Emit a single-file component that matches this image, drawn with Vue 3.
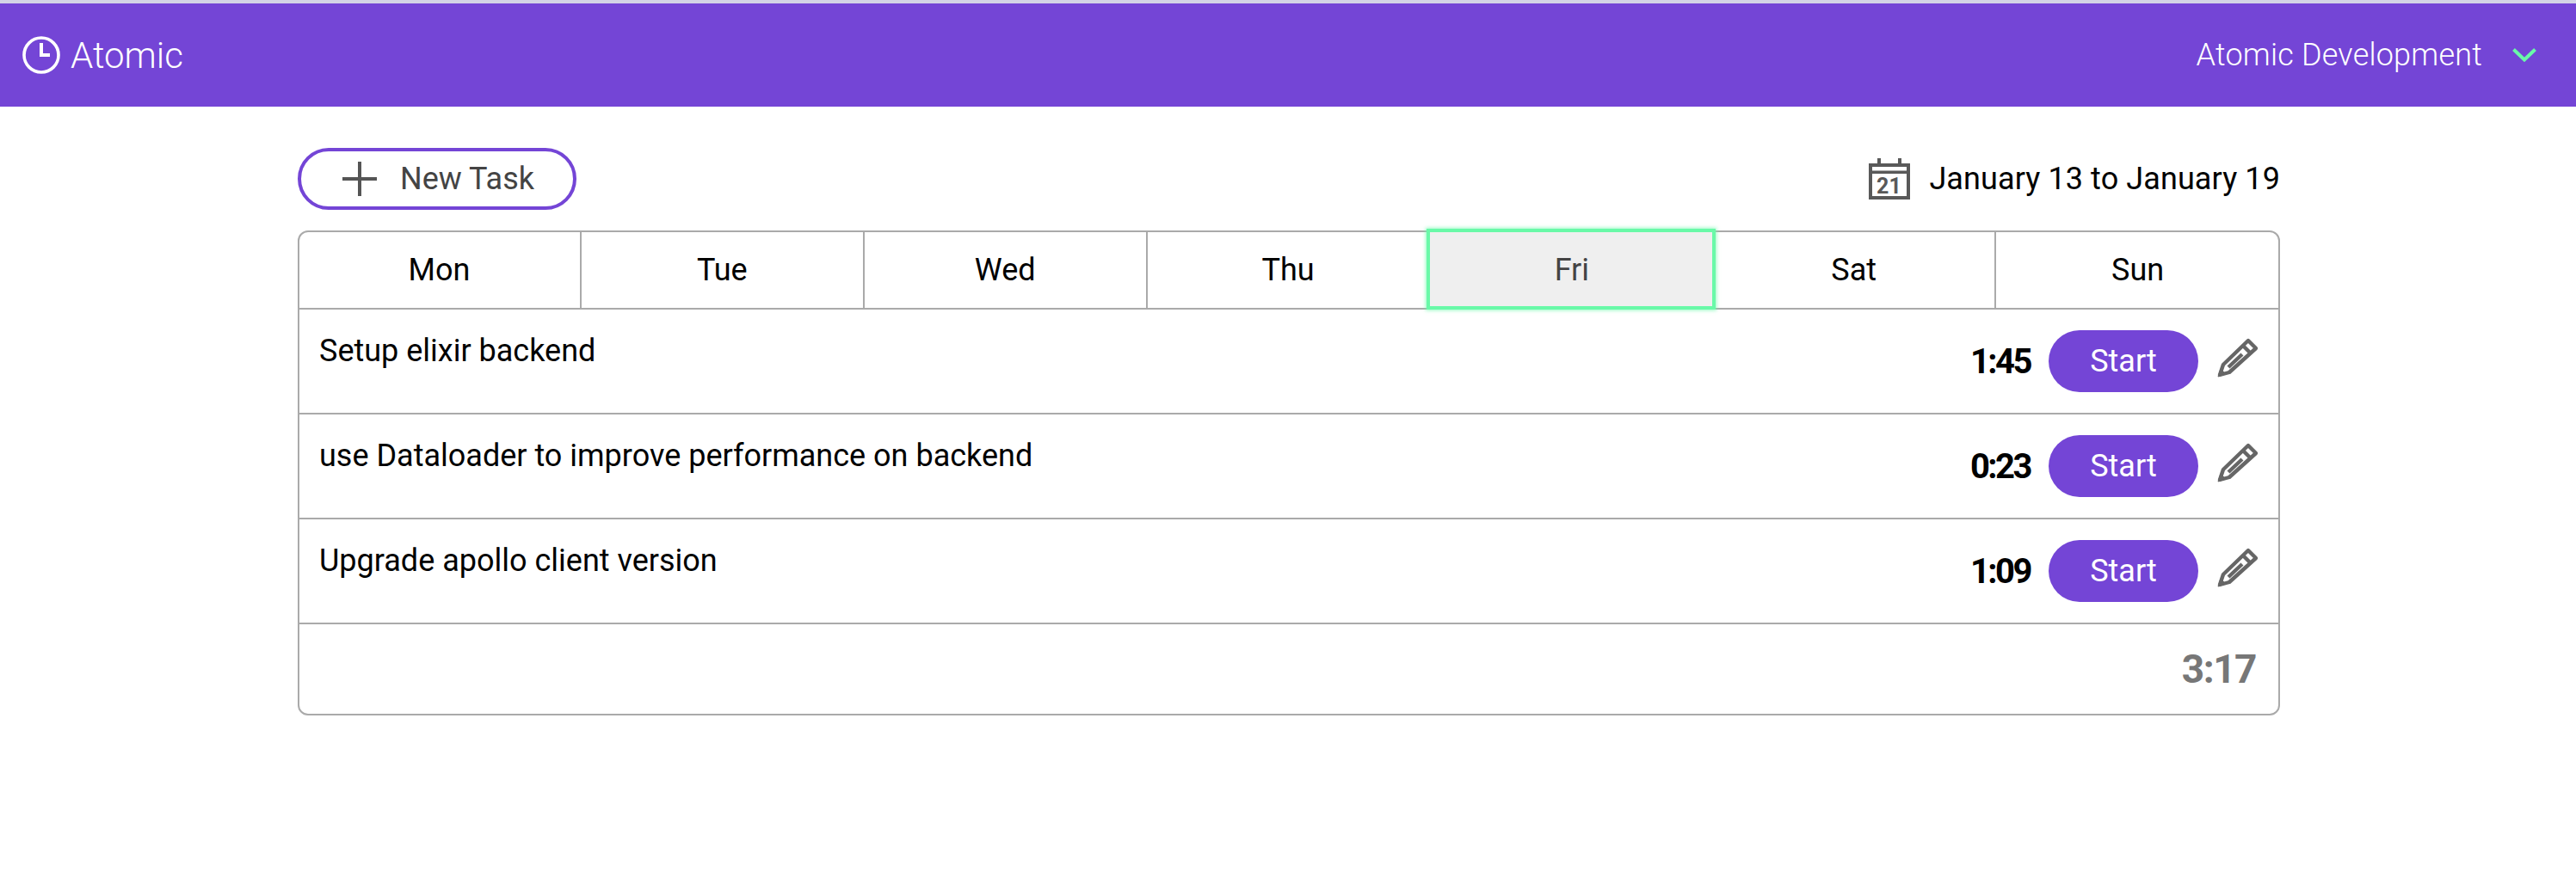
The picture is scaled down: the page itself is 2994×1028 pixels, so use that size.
<script setup>
const days = ["Mon", "Tue", "Wed", "Thu", "Fri", "Sat", "Sun"];
const tasks = [
  { id: 1, title: "Setup elixir backend", time: "1:45" },
  { id: 2, title: "use Dataloader to improve performance on backend", time: "0:23" },
  { id: 3, title: "Upgrade apollo client version", time: "1:09" },
];
</script>

<template>
  <div class="page">
    <header class="topBar">
      <div class="brand">
        <svg class="clock" viewBox="0 0 44 44" fill="none" stroke="#fff" stroke-width="3.6">
          <circle cx="22" cy="22" r="20" />
          <path d="M22 8V22H32" stroke-width="4" />
        </svg>
        <span>Atomic</span>
      </div>
      <div class="account">
        <span>Atomic Development</span>
        <svg class="chevron" viewBox="0 0 28 16" fill="none" stroke="#69f9a8" stroke-width="4">
          <path d="M1.5 1.5L14 13.5L26.5 1.5" />
        </svg>
      </div>
    </header>

    <main class="content">
      <div class="toolbar">
        <button class="newTask">
          <svg class="plus" viewBox="0 0 40 40" stroke="#555" stroke-width="4">
            <path d="M20 0V40M0 20H40" />
          </svg>
          <span>New Task</span>
        </button>
        <div class="dateRange">
          <svg class="calendar" viewBox="0 0 48 48" fill="none" stroke="#595959">
            <path d="M12 0V7M36 0V7" stroke-width="4" />
            <rect x="2" y="8" width="44" height="38" stroke-width="4" />
            <path d="M2 16.2H46" stroke-width="3.6" />
            <text x="23.5" y="41" text-anchor="middle" class="calendarDay">21</text>
          </svg>
          <span>January 13 to January 19</span>
        </div>
      </div>

      <section class="board">
        <div class="days">
          <div v-for="day in days" :key="day" class="day" :class="{ active: day === 'Fri' }">{{ day }}</div>
        </div>
        <div v-for="task in tasks" :key="task.id" class="task">
          <div class="title">{{ task.title }}</div>
          <div class="controls">
            <span class="time">{{ task.time }}</span>
            <button class="start">Start</button>
            <svg class="pencil" viewBox="0 0 60 60" fill="none" stroke="#666" stroke-width="4.4">
              <path d="M43 11L52 20L21 48L10 51L14 39Z" stroke-linejoin="round" />
              <path d="M36 16L46 26M20 42L36 27" />
              <path d="M8 53L11 44L17 50Z" fill="#666" stroke-width="1" />
            </svg>
          </div>
        </div>
        <div class="total">3:17</div>
      </section>
    </main>
  </div>
</template>

<style>
html,
body {
  background: #fff;
}
</style>

<style scoped>
.page {
  min-height: 1028px;
  border-top: 4px solid #d3d3e6;
  font-family: Roboto, sans-serif;
  color: #000;
  box-sizing: border-box;
}

.topBar {
  height: 120px;
  background: #7445d6;
  color: #fff;
  display: flex;
  align-items: center;
  justify-content: space-between;
  padding: 0 46px 0 26px;
}

.brand {
  display: flex;
  align-items: center;
  gap: 12px;
  font-size: 42px;
  font-weight: 300;
}

.clock {
  width: 44px;
  height: 44px;
}

.account {
  display: flex;
  align-items: center;
  gap: 35px;
  font-size: 36px;
  font-weight: 300;
  letter-spacing: 0.2px;
}

.chevron {
  width: 28px;
  height: 16px;
}

.content {
  width: 2304px;
  margin-left: 346px;
}

.toolbar {
  display: flex;
  align-items: center;
  justify-content: space-between;
  height: 144px;
  padding-top: 24px;
  box-sizing: border-box;
}

.newTask {
  width: 324px;
  height: 72px;
  border: 4px solid #7445d6;
  border-radius: 36px;
  background: #fff;
  color: #444;
  font: 400 36px Roboto, sans-serif;
  display: flex;
  align-items: center;
  gap: 27px;
  padding: 0 0 0 48px;
  box-sizing: border-box;
}

.plus {
  width: 40px;
  height: 40px;
}

.dateRange {
  display: flex;
  align-items: center;
  gap: 22px;
  font-size: 36px;
  letter-spacing: 0.1px;
}

.calendar {
  width: 48px;
  height: 48px;
}

.calendarDay {
  font: 700 25px Roboto, sans-serif;
  fill: #595959;
  stroke: none;
}

.board {
  border: 2px solid #aaa;
  border-radius: 12px;
}

.days {
  display: grid;
  grid-template-columns: repeat(7, 1fr);
  margin: -2px -1px 0;
}

.day {
  height: 90px;
  display: flex;
  align-items: center;
  justify-content: center;
  padding-top: 2px;
  box-sizing: border-box;
  font-size: 36px;
  border-right: 2px solid #aaa;
}

.day:last-child {
  border-right: 0;
}

.day.active {
  background: #efefef;
  color: #444;
  border-right: 0;
  position: relative;
}

.day.active::after {
  content: "";
  position: absolute;
  top: -2px;
  right: -3px;
  bottom: -2px;
  left: -4px;
  border: 4px solid #69f9a8;
  box-shadow: 0 0 4px 1px rgba(105, 249, 168, 0.7);
}

.task {
  height: 122px;
  border-top: 2px solid #aaa;
  box-sizing: border-box;
  display: flex;
  justify-content: space-between;
  padding: 0 24px 0 23px;
}

.title {
  font-size: 36px;
  padding-top: 27px;
  line-height: 42px;
}

.controls {
  display: flex;
  align-items: center;
  gap: 18px;
}

.time {
  font-size: 40px;
  font-weight: 700;
  letter-spacing: -2.5px;
  margin-right: 3px;
}

.start {
  width: 174px;
  height: 72px;
  border: 0;
  border-radius: 36px;
  background: #7445d6;
  color: #fff;
  font: 400 36px Roboto, sans-serif;
}

.pencil {
  width: 60px;
  height: 60px;
  margin: 0 -6px 10px -3px;
}

.total {
  height: 106px;
  border-top: 2px solid #aaa;
  box-sizing: border-box;
  display: flex;
  align-items: center;
  justify-content: flex-end;
  padding: 0 26px;
  font-size: 46px;
  font-weight: 700;
  letter-spacing: -1.5px;
  color: #777;
}
</style>
